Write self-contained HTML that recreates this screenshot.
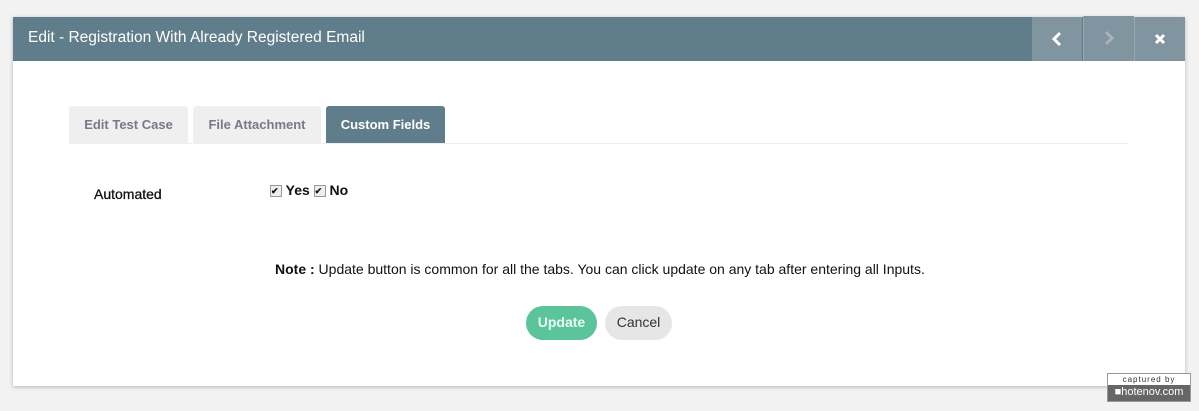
<!DOCTYPE html><html><head><style>
body{margin:0;width:1199px;height:411px;background:#f2f2f3;font-family:"Liberation Sans",sans-serif;position:relative;overflow:hidden}
.modal{position:absolute;left:13px;top:17px;width:1172px;height:369px;background:#fff;box-shadow:0 1px 4px rgba(0,0,0,.25)}
.hd{height:44px;background:#607d8b;color:#fff;font-size:15.5px;line-height:42px;padding-left:15px;position:relative}
.btn{position:absolute;top:0;height:44px;width:50px;background:#80959f;color:#fff;text-align:center;font-size:20px;font-weight:bold}
.tab{position:absolute;top:89px;height:38px;line-height:38px;font-size:13px;font-weight:bold;text-align:center;background:#efefef;color:#787a85;border-radius:3px 3px 0 0}
.t{position:absolute;font-size:14px;color:#111}
</style></head><body>
<div class="modal">
<div class="hd">Edit - Registration With Already Registered Email
<div class="btn" style="left:1019px">
<svg width="14" height="16" viewBox="0 0 14 16" style="margin-top:14px"><path d="M10 2L4 8l6 6" stroke="#fff" stroke-width="3" fill="none"/></svg></div>
<div class="btn" style="left:1070px;top:-1px;height:45px;border-left:1px solid #98a9b1">
<svg width="14" height="16" viewBox="0 0 14 16" style="margin-top:14px"><path d="M4 2l6 6-6 6" stroke="#a9b3b8" stroke-width="3" fill="none"/></svg></div>
<div class="btn" style="left:1121px;border-left:1px solid #98a9b1">
<svg width="12" height="12" viewBox="0 0 12 12" style="margin-top:16px"><path d="M2 2l8 8M10 2l-8 8" stroke="#fff" stroke-width="3"/></svg></div>
</div>
<div class="tab" style="left:56px;width:119px">Edit Test Case</div>
<div class="tab" style="left:180px;width:128px">File Attachment</div>
<div class="tab" style="left:313px;width:119px;background:#607d8b;color:#fff">Custom Fields</div>
<div style="position:absolute;left:56px;top:126px;width:1059px;height:1px;background:#eee"></div>
<div class="t" style="left:81px;top:169px;-webkit-text-stroke:0.3px #111">Automated</div>
<div class="t" style="left:257px;top:165px;font-weight:bold">
<span style="display:inline-block;width:10px;height:10px;border:1px solid #999;background:#eee;font-size:9px;line-height:10px;vertical-align:1px">✔</span> Yes <span style="display:inline-block;width:10px;height:10px;border:1px solid #999;background:#eee;font-size:9px;line-height:10px;vertical-align:1px">✔</span> No</div>
<div class="t" style="left:262px;top:244px"><b>Note :</b> Update button is common for all the tabs. You can click update on any tab after entering all Inputs.</div>
<div style="position:absolute;left:513px;top:289px;width:71px;height:34px;border-radius:17px;background:#5cc49a;color:#eafff5;font-weight:bold;font-size:14px;text-align:center;line-height:33px">Update</div>
<div style="position:absolute;left:592px;top:289px;width:67px;height:34px;border-radius:17px;background:#e6e6e6;color:#333;font-size:14px;text-align:center;line-height:33px">Cancel</div>
</div>
<div style="position:absolute;left:1107px;top:373px;width:82px;height:27px;background:#666;border:1px solid #999">
<div style="background:#fff;height:11px;font-size:8px;line-height:11px;text-align:center;color:#333;letter-spacing:1px">captured by</div>
<div style="color:#fff;font-size:11px;line-height:14px;text-align:center">■hotenov.com</div></div>
</body></html>
